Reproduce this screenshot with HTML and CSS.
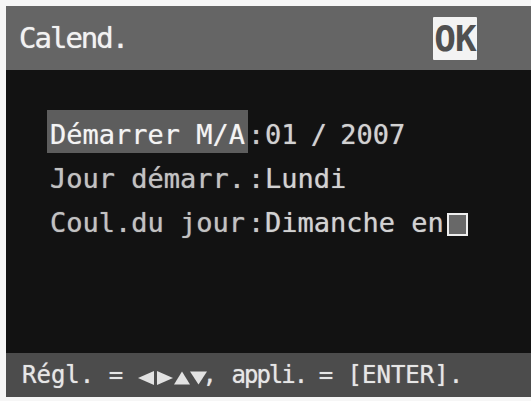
FILE: index.html
```html
<!DOCTYPE html>
<html lang="fr">
<head>
<meta charset="utf-8">
<title>Calend.</title>
<link rel="stylesheet" href="styles.css">
</head>
<body>
<div class="screen">
  <header class="top">
    <span class="title">Calend.</span>
    <span class="ok">OK</span>
  </header>
  <main class="body">
    <div class="rows">
      <div class="row">
        <span class="label selected">Démarrer M/A</span>
        <span class="colon">:</span>
        <span class="value date">01 / 2007</span>
      </div>
      <div class="row">
        <span class="label">Jour démarr.</span>
        <span class="colon">:</span>
        <span class="value">Lundi</span>
      </div>
      <div class="row">
        <span class="label">Coul.du jour</span>
        <span class="colon">:</span>
        <span class="value">Dimanche en<span class="swatch"></span></span>
      </div>
    </div>
  </main>
  <footer class="bottom">
    <span class="hint">Régl. = <svg class="arrows" width="65" height="14" viewBox="0 0 65 14"><polygon points="0,7 16,0 16,14"/><polygon points="19,0 35,7 19,14"/><polygon points="36,13.5 44,0.5 52,13.5"/><polygon points="52,0.5 69,0.5 60.5,13.5"/></svg>, <span class="tight">appli. </span>= [ENTER].</span>
  </footer>
</div>
</body>
</html>
```
FILE: styles.css
```css
html, body {
  margin: 0;
  padding: 0;
  background: #f6f6f6;
}

body {
  width: 531px;
  height: 401px;
  overflow: hidden;
  font-family: "DejaVu Sans Mono", "Liberation Mono", monospace;
}

.screen {
  margin: 6px 0 4px 6px;
  height: 391px;
  display: flex;
  flex-direction: column;
  background: #121212;
}

.top {
  height: 64px;
  flex: none;
  background: #656565;
  display: flex;
  align-items: center;
  justify-content: space-between;
  padding: 0 54px 0 13px;
}

.title {
  font-size: 29px;
  letter-spacing: -2px;
  color: #f2f2f2;
  text-shadow: 0 0 1px rgba(242, 242, 242, 0.8);
}

.ok {
  width: 44px;
  height: 43px;
  margin-top: 1px;
  background: #f3f3f3;
  color: #505050;
  font-weight: bold;
  font-size: 36px;
  letter-spacing: -1px;
  display: flex;
  align-items: center;
  justify-content: center;
  border-radius: 1px;
}

.body {
  flex: 1;
  padding: 40px 0 0 41px;
}

.rows {
  display: flex;
  flex-direction: column;
  gap: 1px;
}

.row {
  display: flex;
  font-size: 27px;
  line-height: 37px;
  text-shadow: 0 0 1px rgba(210, 210, 210, 0.7);
}

.label {
  width: 201px;
  box-sizing: border-box;
  padding: 6px 0 0 3px;
  color: #c2c2c2;
  white-space: pre;
}

.label.selected {
  background: #5d5d5d;
  color: #f4f4f4;
}

.colon {
  width: 12px;
  padding-top: 6px;
  text-align: center;
  color: #c8c8c8;
}

.value {
  padding: 6px 0 0 5px;
  color: #d2d2d2;
  display: flex;
  align-items: center;
  white-space: pre;
}

.value.date {
  word-spacing: -3px;
}

.swatch {
  width: 21px;
  height: 23px;
  box-sizing: border-box;
  margin: 4px 0 0 3px;
  border: 2px solid #eeeeee;
  background: #686868;
}

.bottom {
  height: 44px;
  flex: none;
  background: #4c4c4c;
  display: flex;
  align-items: center;
  padding-left: 16px;
}

.hint {
  font-size: 24px;
  color: #e6e6e6;
  white-space: pre;
  text-shadow: 0 0 1px rgba(230, 230, 230, 0.7);
}

.tight {
  letter-spacing: -2px;
}

.arrows {
  overflow: visible;
  vertical-align: -2px;
  fill: #e2e2e2;
}
```
